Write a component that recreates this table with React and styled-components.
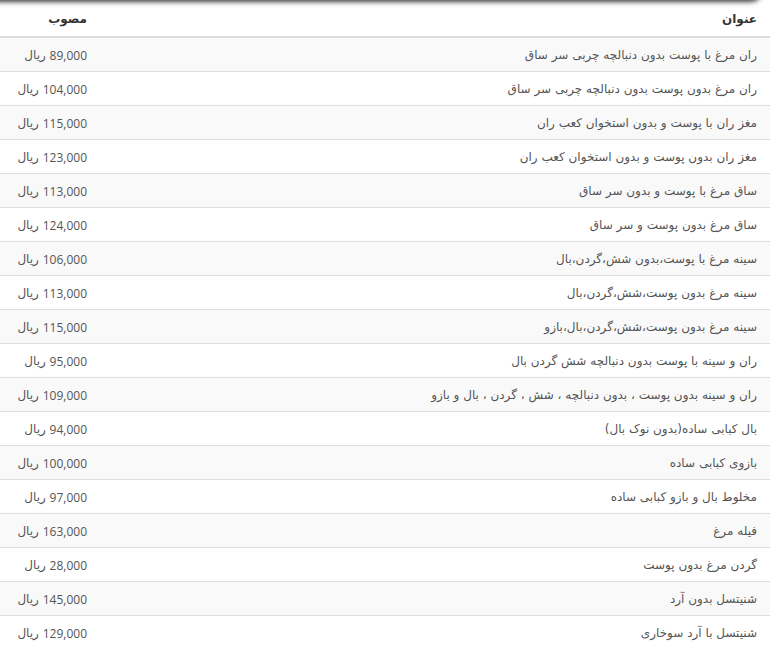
import React from "react";
import styled, { createGlobalStyle } from "styled-components";

const Global = createGlobalStyle`
  html, body { margin: 0; padding: 0; background: #fff; }
  body { font-family: Tahoma, "DejaVu Sans", sans-serif; }
`;

const Page = styled.div`
  position: relative;
  width: 770px;
  overflow: hidden;
  direction: rtl;
`;

const TopShadow = styled.div`
  position: absolute;
  top: -12px;
  left: -30px;
  right: 8px;
  height: 12px;
  border-radius: 0 0 14px 14px;
  box-shadow: 0 1px 5px 1px rgba(0, 0, 0, 0.75);
  background: #555;
`;

const Table = styled.div`
  display: grid;
  grid-template-columns: 1fr 95px;
`;

const HeadCell = styled.div`
  height: 38px;
  box-sizing: border-box;
  padding: 11px ${(p) => (p.$title ? "13px" : "8px")} 0 8px;
  border-bottom: 2px solid #ddd;
  font-size: 12px;
  font-weight: bold;
  color: #333;
  text-align: right;
  line-height: 17px;
`;

const Cell = styled.div`
  height: 34px;
  box-sizing: border-box;
  padding: 1px ${(p) => (p.$title ? "13px" : "8px")} 0 8px;
  border-bottom: 1px solid #ddd;
  background: ${(p) => (p.$striped ? "#f9f9f9" : "#fff")};
  font-size: 12px;
  color: #555;
  display: flex;
  align-items: center;
  white-space: nowrap;
`;

const Price = styled.span`
  font-family: "Open Sans", "DejaVu Sans", sans-serif;
`;

const rows = [
  ["ران مرغ با پوست بدون دنبالچه چربی سر ساق", "89,000"],
  ["ران مرغ بدون پوست بدون دنبالچه چربی سر ساق", "104,000"],
  ["مغز ران با پوست و بدون استخوان کعب ران", "115,000"],
  ["مغز ران بدون پوست و بدون استخوان کعب ران", "123,000"],
  ["ساق مرغ با پوست و بدون سر ساق", "113,000"],
  ["ساق مرغ بدون پوست و سر ساق", "124,000"],
  ["سینه مرغ با پوست،بدون شش،گردن،بال", "106,000"],
  ["سینه مرغ بدون پوست،شش،گردن،بال", "113,000"],
  ["سینه مرغ بدون پوست،شش،گردن،بال،بازو", "115,000"],
  ["ران و سینه با پوست بدون دنبالچه شش گردن بال", "95,000"],
  ["ران و سینه بدون پوست ، بدون دنبالچه ، شش ، گردن ، بال و بازو", "109,000"],
  ["بال کبابی ساده(بدون نوک بال)", "94,000"],
  ["بازوی کبابی ساده", "100,000"],
  ["مخلوط بال و بازو کبابی ساده", "97,000"],
  ["فیله مرغ", "163,000"],
  ["گردن مرغ بدون پوست", "28,000"],
  ["شنیتسل بدون آرد", "145,000"],
  ["شنیتسل با آرد سوخاری", "129,000"],
];

export default function App() {
  return (
    <>
      <Global />
      <Page>
        <TopShadow />
        <Table>
          <HeadCell $title>عنوان</HeadCell>
          <HeadCell>مصوب</HeadCell>
          {rows.map(([t, p], i) => (
            <React.Fragment key={i}>
              <Cell $title $striped={i % 2 === 0}>{t}</Cell>
              <Cell $striped={i % 2 === 0}>
                <Price>{p}</Price>&nbsp;ریال
              </Cell>
            </React.Fragment>
          ))}
        </Table>
      </Page>
    </>
  );
}
